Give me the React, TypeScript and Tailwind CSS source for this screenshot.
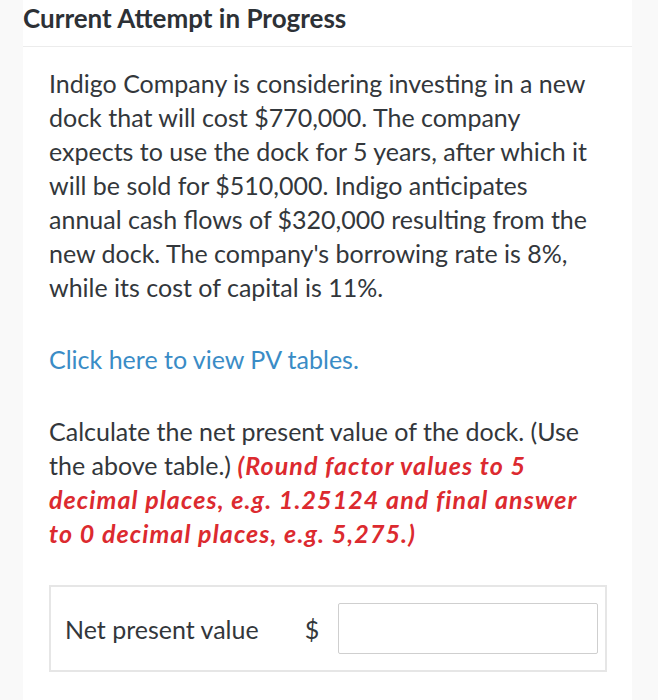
import React from "react";

export default function App() {
  return (
    <div className="min-h-[700px] bg-[#f9f9f9] pl-[23px] pr-[26px]" style={{ fontFamily: "Lato, 'Open Sans', sans-serif" }}>
      <div className="min-h-[700px] bg-white">
        <div className="flex h-[47px] items-start border-b border-[#ececec] pl-0 pt-[2px]">
          <h1 className="text-[26px] font-bold leading-[32px] text-[#2d3136]">Current Attempt in Progress</h1>
        </div>
        <div className="ml-[26px] w-[558px] pt-[19px] text-[25px] leading-[34px] text-[#33373b]">
          <p className="w-[548px]">
            Indigo Company is considering investing in a new dock that will cost $770,000. The company expects to use the dock for 5 years, after which it will be sold for $510,000. Indigo anticipates annual cash flows of $320,000 resulting from the new dock. The company's borrowing rate is 8%, while its cost of capital is 11%.
          </p>
          <p className="mt-[38px] text-[#3a8cc6]">Click here to view PV tables.</p>
          <p className="mt-[38px] w-[548px]">
            Calculate the net present value of the dock. (Use the above table.){" "}
            <span className="font-bold italic tracking-[1.1px] text-[#dc2a2f]">
              (Round factor values to 5 decimal places, e.g. 1.25124 and final answer to 0 decimal places, e.g. 5,275.)
            </span>
          </p>
          <div className="mt-[35px] flex h-[87px] items-center border-2 border-[#e6e6e6] pl-[14px] pr-[7px]">
            <span className="text-[25px] text-[#33373b]">Net present value</span>
            <span className="ml-[46px] text-[25px] text-[#33373b]">$</span>
            <div className="ml-[19px] h-[51px] flex-1 rounded-[2px] border border-[#cfcfcf] bg-white"></div>
          </div>
        </div>
      </div>
    </div>
  );
}
